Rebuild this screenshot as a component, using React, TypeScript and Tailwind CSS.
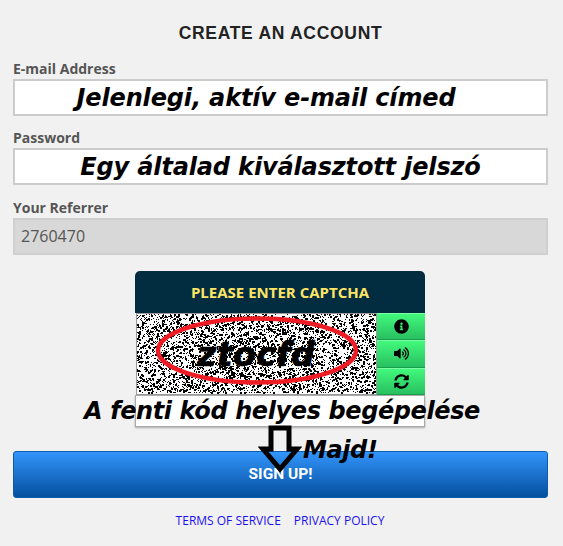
import React from 'react';
import { FaInfoCircle, FaVolumeUp, FaSyncAlt } from 'react-icons/fa';

// pseudo random speckle for the captcha picture
function noisePath(w: number, h: number) {
    let seed = 12345;
    let d = '';
    for (let y = 0; y < h; y++) {
        for (let x = 0; x < w; x++) {
            seed = (seed * 1103515245 + 12345) & 0x7fffffff;
            const r = (seed >> 16) % 100;
            if (r < 18) d += `M${x} ${y}h1v1h-1z`;
            else if (r < 24) d += `M${x} ${y}h2v2h-2z`;
        }
    }
    return d;
}

const hand = "font-['DejaVu_Sans',sans-serif] font-bold italic text-black";

function Field({ label, children, className }: { label: string; children: React.ReactNode; className: string }) {
    return (
        <div className="mb-[10.25px]">
            <div className="h-[22px] font-['Open_Sans',sans-serif] text-[14px] leading-[24px] font-bold text-[#555555]">{label}</div>
            <div className={`flex h-[37px] items-center border-2 ${className}`}>{children}</div>
        </div>
    );
}

export default function App() {
    const noise = React.useMemo(() => noisePath(239, 79), []);
    const buttons = [FaInfoCircle, FaVolumeUp, FaSyncAlt];

    return (
        <div className="h-[546px] w-[563px] overflow-hidden bg-[#f1f1f1] pt-[23px] pr-[15px] pl-[13px]">
            <h1 className="mb-[13px] h-[21px] text-center font-['Liberation_Sans',sans-serif] text-[17.5px] leading-[21px] font-bold tracking-[0.7px] text-[#222222]">
                CREATE AN ACCOUNT
            </h1>

            <Field label="E-mail Address" className="justify-center border-[#cccccc] bg-white pr-[29px]">
                <span className={`${hand} text-[24px] tracking-[-0.15px] whitespace-nowrap`}>Jelenlegi, aktív e-mail címed</span>
            </Field>
            <Field label="Password" className="justify-center border-[#cccccc] bg-white">
                <span className={`${hand} text-[24px] tracking-[-0.15px] whitespace-nowrap`}>Egy általad kiválasztott jelszó</span>
            </Field>
            <Field label="Your Referrer" className="border-[#cfcfcf] bg-[#d8d8d8]">
                <span className="pl-[6px] font-['Open_Sans',sans-serif] text-[16px] text-[#555555]">2760470</span>
            </Field>

            <div className="relative mt-[16.5px] ml-[122px] w-[290px]">
                <div className="flex h-[42px] items-center justify-center rounded-t-[5px] bg-[#022c3f] font-['Open_Sans',sans-serif] text-[15px] font-bold text-[#ffe566]">
                    PLEASE ENTER CAPTCHA
                </div>
                <div className="flex h-[82px]">
                    <div className="relative ml-px w-[241px] border border-[#999999] bg-white">
                        <svg width="239" height="80" viewBox="0 0 239 80" className="block">
                            <path d={noise} fill="#000000" shapeRendering="crispEdges" />
                            <text x="60" y="52" fontFamily="DejaVu Sans" fontWeight="700" fontStyle="italic" fontSize="33" stroke="#000000" strokeWidth="0.6" letterSpacing="0.5">ztocfd</text>
                            <ellipse cx="120" cy="36.5" rx="99" ry="32" fill="none" stroke="#ee1c25" strokeWidth="4.5" />
                        </svg>
                    </div>
                    <div className="flex w-[48px] flex-col">
                        {buttons.map((Icon, i) => (
                            <div key={i} className="flex h-[27.33px] items-center justify-center border-t border-b border-t-[#7dfca6] border-b-[#17a04a] bg-gradient-to-b from-[#42f97c] to-[#28c060]">
                                <Icon className="h-[15px] w-[15px] text-black" />
                            </div>
                        ))}
                    </div>
                </div>
                <div className="h-[32px] border border-[#aaaaaa] bg-white shadow-[0_1px_2px_rgba(0,0,0,0.3)]" />
                <div className={`${hand} absolute top-[125px] left-[-51px] w-[396px] text-center text-[24px] leading-[30px] tracking-[-0.4px] whitespace-nowrap`}>
                    A fenti kód helyes begépelése
                </div>
            </div>

            <div className="relative mt-[24px]">
                <button className="flex h-[47px] w-full items-center justify-center rounded-[3px] border border-[#0b5cab] bg-gradient-to-b from-[#3295fb] to-[#03509f] font-['Roboto',sans-serif] text-[15.5px] font-bold text-white">
                    SIGN UP!
                </button>
                <svg width="44" height="50" viewBox="0 0 44 50" className="absolute top-[-26px] left-[245px]">
                    <path d="M13 3H31V24H39L22 44L5 24H13Z" fill="none" stroke="#000000" strokeWidth="5" />
                </svg>
                <span className={`${hand} absolute top-[-16px] left-[290px] text-[24px] leading-[30px] tracking-[-0.4px]`}>Majd!</span>
            </div>

            <div className="mt-[14px] flex justify-center gap-[13px] pr-[1px] font-['Open_Sans',sans-serif] text-[12px] leading-[17px] text-[#1c10f0]">
                <a>TERMS OF SERVICE</a>
                <a>PRIVACY POLICY</a>
            </div>
        </div>
    );
}
